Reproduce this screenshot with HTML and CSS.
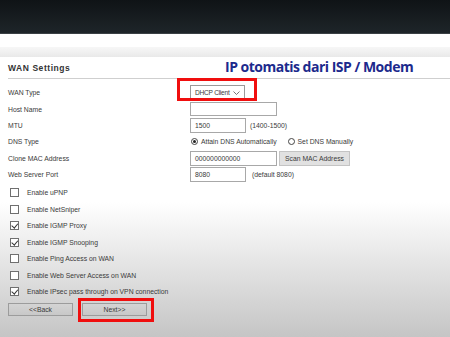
FILE: index.html
```html
<!DOCTYPE html>
<html lang="en">
<head>
  <meta charset="UTF-8">
  <title>WAN Settings</title>
  <link rel="stylesheet" href="styles.css">
</head>
<body>
  <div class="topbar"></div>
  <div class="spacer"></div>
  <div class="shade"></div>

  <div class="panel">
    <div class="panel-head">
      <span class="panel-title">WAN Settings</span>
      <span class="note">IP otomatis dari ISP / Modem</span>
    </div>

    <div class="form">
      <div class="row">
        <span class="label">WAN Type</span>
        <div class="field">
          <div class="select">DHCP Client
            <svg class="chev" width="7" height="4" viewBox="0 0 7 4"><path d="M0.5 0.5 L3.5 3.5 L6.5 0.5" fill="none" stroke="#555" stroke-width="0.8"/></svg>
          </div>
        </div>
      </div>
      <div class="row">
        <span class="label">Host Name</span>
        <div class="field"><div class="input wide"></div></div>
      </div>
      <div class="row">
        <span class="label">MTU</span>
        <div class="field"><div class="input short">1500</div><span class="hint">(1400-1500)</span></div>
      </div>
      <div class="row">
        <span class="label">DNS Type</span>
        <div class="field">
          <span class="radio on"></span><span class="opt">Attain DNS Automatically</span>
          <span class="radio"></span><span class="opt">Set DNS Manually</span>
        </div>
      </div>
      <div class="row">
        <span class="label">Clone MAC Address</span>
        <div class="field"><div class="input wide">000000000000</div><span class="btn-scan">Scan MAC Address</span></div>
      </div>
      <div class="row">
        <span class="label">Web Server Port</span>
        <div class="field"><div class="input short">8080</div><span class="hint port">(default 8080)</span></div>
      </div>

      <div class="checks">
        <div class="check-row"><span class="box"></span>Enable uPNP</div>
        <div class="check-row"><span class="box"></span>Enable NetSniper</div>
        <div class="check-row"><span class="box checked"></span>Enable IGMP Proxy</div>
        <div class="check-row"><span class="box checked"></span>Enable IGMP Snooping</div>
        <div class="check-row"><span class="box"></span>Enable Ping Access on WAN</div>
        <div class="check-row"><span class="box"></span>Enable Web Server Access on WAN</div>
        <div class="check-row"><span class="box checked"></span>Enable IPsec pass through on VPN connection</div>
      </div>

      <div class="actions">
        <span class="btn">&lt;&lt;Back</span>
        <span class="btn next">Next&gt;&gt;</span>
      </div>
    </div>

    <div class="mark mark-select"></div>
    <div class="mark mark-next"></div>
  </div>
</body>
</html>
```

FILE: styles.css
```css
html {
  height: 100%;
}
body {
  margin: 0;
  min-height: 100%;
  font-family: "Liberation Sans", Arial, sans-serif;
  color: #3a3a3a;
  background: linear-gradient(to bottom, #ffffff 0, #ffffff 60%, #c5c5c5 100%);
}
.topbar {
  height: 34px;
  background: linear-gradient(to bottom, #0f1316, #1e2529);
  border-bottom: 1px solid #3a4044;
  box-sizing: border-box;
}
.spacer {
  height: 13px;
}
.shade {
  height: 10px;
  background: linear-gradient(to bottom, #f7f7f7, #e9e9e9);
}
.panel {
  position: relative;
  padding-left: 8px;
}
.panel-head {
  height: 22px;
  border-bottom: 1px solid #cfcfcf;
  display: flex;
  align-items: center;
  box-sizing: border-box;
}
.panel-title {
  width: 217px;
  font-size: 8.5px;
  font-weight: bold;
  letter-spacing: 0.55px;
  color: #333;
  padding-top: 1px;
}
.note {
  font-family: "Open Sans", sans-serif;
  font-weight: bold;
  font-size: 14px;
  letter-spacing: -0.5px;
  color: #1c2a8c;
  margin-top: -3px;
}
.form {
  padding-top: 5.5px;
  font-size: 6.8px;
}
.row {
  display: grid;
  grid-template-columns: 182px auto;
  align-items: center;
  height: 16.4px;
}
.field {
  display: flex;
  align-items: center;
}
.select {
  width: 55px;
  height: 15px;
  box-sizing: border-box;
  border: 1px solid #9a9a9a;
  display: flex;
  align-items: center;
  padding-left: 4px;
  font-size: 6.6px;
  letter-spacing: -0.25px;
  position: relative;
}
.chev {
  position: absolute;
  right: 4px;
  top: 5px;
}
.input {
  height: 14.5px;
  box-sizing: border-box;
  border: 1px solid #a8a8a8;
  display: flex;
  align-items: center;
  padding-left: 4px;
  background: #fff;
}
.input.wide {
  width: 87px;
}
.input.short {
  width: 56px;
}
.hint {
  margin-left: 4px;
}
.hint.port {
  margin-left: 6px;
}
.radio {
  width: 7px;
  height: 7px;
  border: 1px solid #444;
  border-radius: 50%;
  box-sizing: border-box;
  margin: 0 3px 0 1px;
  display: inline-flex;
  align-items: center;
  justify-content: center;
}
.radio.on::after {
  content: "";
  width: 3px;
  height: 3px;
  border-radius: 50%;
  background: #222;
}
.opt {
  margin-right: 10px;
}
.btn-scan {
  margin-left: 2px;
  width: 71px;
  height: 15px;
  box-sizing: border-box;
  background: #e1e1e1;
  border: 1px solid #c4c4c4;
  display: flex;
  align-items: center;
  justify-content: center;
}
.checks {
  margin-top: 1.5px;
}
.check-row {
  height: 16.5px;
  display: flex;
  align-items: center;
  padding-left: 2px;
}
.box {
  width: 9px;
  height: 9px;
  box-sizing: border-box;
  border: 1px solid #6f6f6f;
  background: #fff;
  margin-right: 8px;
  position: relative;
}
.box.checked::after {
  content: "";
  position: absolute;
  left: 2px;
  top: 0px;
  width: 2.5px;
  height: 4.5px;
  border-right: 1px solid #333;
  border-bottom: 1px solid #333;
  transform: rotate(40deg);
}
.actions {
  display: flex;
  gap: 9px;
  margin-top: 3px;
}
.btn {
  width: 65px;
  height: 13px;
  box-sizing: border-box;
  background: linear-gradient(to bottom, #d4d4d4, #c8c8c8);
  border: 1px solid #9c9c9c;
  display: flex;
  align-items: center;
  justify-content: center;
}
.mark {
  position: absolute;
  border: 3px solid #f00e0e;
  box-sizing: border-box;
}
.mark-select {
  left: 177px;
  top: 21px;
  width: 80px;
  height: 23px;
}
.mark-next {
  left: 78px;
  top: 241px;
  width: 76px;
  height: 24px;
}
```
